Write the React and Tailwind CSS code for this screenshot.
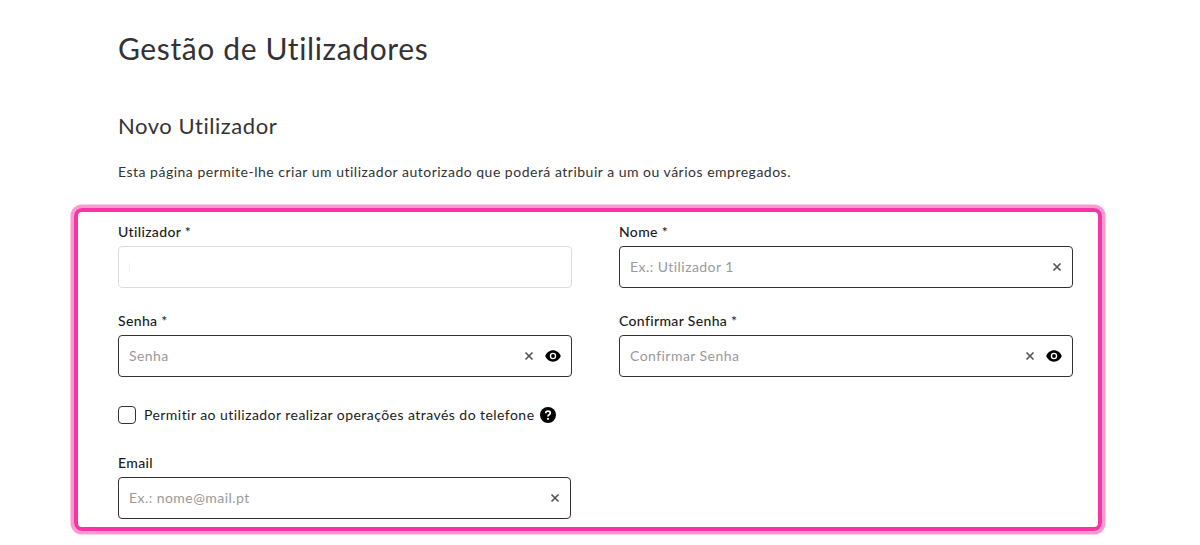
import React from "react";

const X = () => (
  <svg width="10" height="10" viewBox="0 0 10 10" className="shrink-0 text-[#555]">
    <path d="M1.5 1.5l7 7M8.5 1.5l-7 7" stroke="currentColor" strokeWidth="1.7" fill="none" />
  </svg>
);

const Eye = () => (
  <svg width="16" height="12" viewBox="0 0 16 12" className="shrink-0 ml-[11px]">
    <path fillRule="evenodd" d="M8 .3C4.600.3 1.600 2.500.2 6c1.400 3.500 4.400 5.700 7.800 5.700s6.400-2.200 7.800-5.700C14.400 2.500 11.400.3 8 .3zM8 9.200A3.200 3.200 0 1 1 8 2.800a3.200 3.200 0 0 1 0 6.400z" fill="#000" />
    <circle cx="8" cy="6" r="1.900" fill="#000" />
  </svg>
);

const Help = () => (
  <svg width="16" height="16" viewBox="0 0 16 16" className="shrink-0">
    <circle cx="8" cy="8" r="8" fill="#000" />
    <path d="M5.700 6.200C5.800 5 6.800 4.200 8 4.200c1.300 0 2.300.8 2.300 1.900 0 1.700-2.300 1.700-2.300 3.300" stroke="#fff" strokeWidth="1.700" fill="none" />
    <circle cx="8" cy="11.800" r="1.100" fill="#fff" />
  </svg>
);

function Field({ label, placeholder, disabled, clear, eye, className = "" }) {
  return (
    <div className={`flex flex-col ${className}`}>
      <label className="h-[20px] leading-[20px] text-[14px] tracking-[0.35px] font-medium text-[#1b1b1b] mb-[4px]">{label}</label>
      <div className={`h-[42px] rounded-[4px] border flex items-center pl-[10px] pr-[10px] bg-white ${disabled ? "border-[#dcdcdc]" : "border-[#333]"}`}>
        {disabled && <span className="w-px h-[9px] bg-[#f0f0f0]" />}
        <span className="flex-1 pb-[2px] text-[14px] tracking-[0.45px] text-[#9a9a9a]">{placeholder}</span>
        {clear && <X />}
        {eye && <Eye />}
      </div>
    </div>
  );
}

export default function App() {
  return (
    <div className="w-[1200px] h-[545px] overflow-hidden bg-white font-['Lato','Noto_Sans',sans-serif] text-[#333]">
      <div className="pl-[118px] pt-[28px]">
        <h1 className="h-[40px] leading-[40px] text-[30px] tracking-[0.62px]">Gestão de Utilizadores</h1>
        <h2 className="mt-[43px] h-[30px] leading-[30px] text-[22px] tracking-[0.55px]">Novo Utilizador</h2>
        <p className="mt-[21px] h-[20px] leading-[20px] text-[14px] tracking-[0.5px]">
          Esta página permite-lhe criar um utilizador autorizado que poderá atribuir a um ou vários empregados.
        </p>
      </div>
      <div className="mt-[26px] ml-[74px] w-[1028px] h-[323px] box-border border-4 border-[#f535a5] ring-[3.5px] ring-[#fb9ad0] rounded-[8px] pl-[40px] pt-[10px]">
        <div className="grid grid-cols-[454px_454px] gap-x-[47px] gap-y-[23px]">
          <Field label="Utilizador *" disabled />
          <Field label="Nome *" placeholder="Ex.: Utilizador 1" clear />
          <Field label="Senha *" placeholder="Senha" clear eye />
          <Field label="Confirmar Senha *" placeholder="Confirmar Senha" clear eye />
        </div>
        <div className="mt-[28px] h-[20px] flex items-center">
          <span className="w-[18px] h-[18px] rounded-[4px] border border-[#333] mr-[8px]" />
          <span className="text-[14px] tracking-[0.45px] pb-[2px] text-[#1b1b1b] mr-[6px]">Permitir ao utilizador realizar operações através do telefone</span>
          <Help />
        </div>
        <Field className="mt-[28px] w-[453px]" label="Email" placeholder="Ex.: nome@mail.pt" clear />
      </div>
    </div>
  );
}
